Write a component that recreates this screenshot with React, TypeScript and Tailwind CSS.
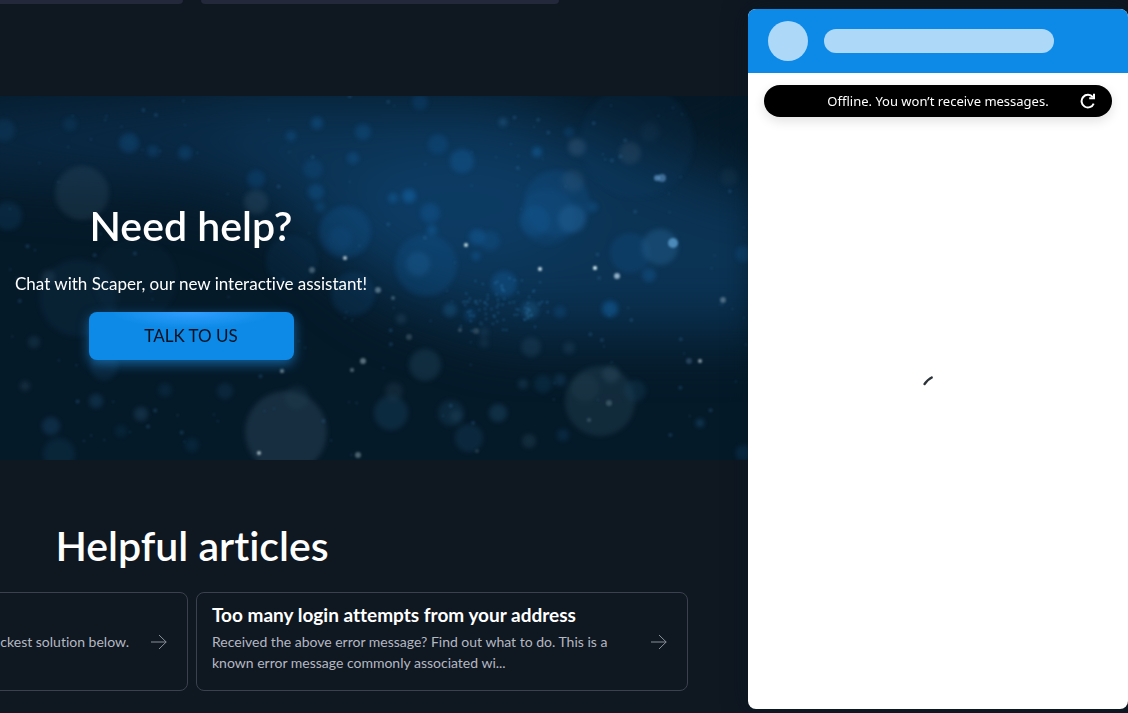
import React from "react";

type Dot = [number, number, number, string, number];

const bokeh: Dot[] = [
  [82, 97, 27, "#4a6a80", 0.3],
  [8, 120, 14, "#1b6298", 0.28],
  [4, 34, 11, "#1b6298", 0.28],
  [129, 47, 10, "#1a6fb5", 0.35],
  [153, 55, 6, "#1a6fb5", 0.3],
  [185, 57, 7, "#1a6fb5", 0.35],
  [70, 28, 7, "#1b6298", 0.25],
  [78, 202, 39, "#1d4b70", 0.22],
  [135, 184, 42, "#1d4b70", 0.13],
  [48, 181, 7, "#6b8fa8", 0.22],
  [256, 106, 12, "#5f8199", 0.28],
  [256, 83, 9, "#1464a8", 0.35],
  [313, 73, 10, "#1464a8", 0.3],
  [316, 96, 8, "#1a6fb5", 0.4],
  [320, 111, 5, "#1a6fb5", 0.35],
  [317, 27, 6, "#1a6fb5", 0.45],
  [291, 40, 5, "#1a6fb5", 0.4],
  [353, 62, 6, "#1a6fb5", 0.4],
  [363, 36, 8, "#1a6fb5", 0.35],
  [292, 165, 26, "#16548c", 0.2],
  [345, 136, 26, "#1764a6", 0.36],
  [340, 143, 12, "#1764a6", 0.25],
  [353, 198, 22, "#1764a6", 0.24],
  [286, 336, 41, "#4a6a80", 0.38],
  [297, 301, 12, "#3c627d", 0.2],
  [96, 305, 7, "#2a6596", 0.38],
  [51, 330, 9, "#2a6596", 0.38],
  [59, 358, 16, "#1f5a86", 0.25],
  [141, 318, 7, "#3c6c90", 0.38],
  [165, 294, 7, "#1b6298", 0.22],
  [225, 295, 8, "#2a6596", 0.25],
  [121, 335, 6, "#1b6298", 0.2],
  [192, 349, 7, "#1b6298", 0.22],
  [104, 270, 14, "#24608f", 0.25],
  [34, 246, 6, "#3c6c90", 0.3],
  [25, 290, 5, "#54788f", 0.3],
  [438, 48, 10, "#1464a8", 0.35],
  [462, 65, 12, "#1a6fb5", 0.42],
  [420, 6, 8, "#1464a8", 0.3],
  [503, 26, 4, "#3c86bd", 0.45],
  [537, 56, 5, "#1a7fd0", 0.5],
  [577, 51, 9, "#5b7fa0", 0.38],
  [569, 36, 5, "#1a6fb5", 0.3],
  [630, 57, 11, "#5f7488", 0.33],
  [650, 36, 10, "#4a6a80", 0.16],
  [637, 45, 57, "#12497c", 0.18],
  [557, 107, 33, "#1764a6", 0.3],
  [548, 121, 28, "#1764a6", 0.22],
  [573, 85, 11, "#52738f", 0.26],
  [535, 125, 15, "#1764a6", 0.4],
  [572, 123, 14, "#3079b4", 0.44],
  [593, 111, 5, "#1a6fb5", 0.4],
  [409, 100, 7, "#1a7fd0", 0.5],
  [393, 102, 5, "#1a7fd0", 0.4],
  [430, 117, 10, "#1464a8", 0.45],
  [432, 134, 5, "#1a7fd0", 0.4],
  [477, 141, 8, "#1a6fb5", 0.48],
  [490, 145, 10, "#1764a6", 0.35],
  [476, 160, 4, "#1a7fd0", 0.4],
  [426, 169, 31, "#1764a6", 0.32],
  [418, 168, 12, "#2b7bb8", 0.32],
  [504, 188, 13, "#1a70b8", 0.4],
  [630, 157, 20, "#1764a6", 0.3],
  [660, 151, 18, "#3479ad", 0.42],
  [649, 179, 7, "#1a70b8", 0.42],
  [610, 213, 8, "#1a7fd0", 0.5],
  [530, 214, 9, "#2b78af", 0.38],
  [450, 214, 7, "#2b78af", 0.38],
  [470, 219, 6, "#1764a6", 0.35],
  [560, 216, 6, "#1764a6", 0.35],
  [744, 158, 8, "#1a7fd0", 0.3],
  [531, 251, 10, "#355d7c", 0.38],
  [569, 252, 6, "#355d7c", 0.38],
  [425, 269, 16, "#356480", 0.36],
  [600, 305, 35, "#3e6274", 0.36],
  [585, 292, 14, "#5a7585", 0.16],
  [611, 278, 9, "#4b7186", 0.33],
  [635, 295, 11, "#26587a", 0.3],
  [543, 288, 9, "#1c5880", 0.3],
  [560, 284, 6, "#2a6596", 0.35],
  [523, 288, 5, "#3c6c90", 0.35],
  [391, 317, 17, "#24597f", 0.38],
  [394, 295, 9, "#426078", 0.28],
  [451, 317, 13, "#24597f", 0.32],
  [456, 320, 6, "#3c6c90", 0.3],
  [498, 317, 9, "#2f6990", 0.4],
  [469, 342, 14, "#24597f", 0.34],
  [529, 345, 7, "#3c6478", 0.36],
  [563, 339, 6, "#1b6298", 0.3],
  [700, 327, 4, "#2f86bd", 0.4],
  [744, 357, 8, "#1b6298", 0.35],
  [729, 81, 9, "#33566c", 0.25],
  [484, 247, 5, "#365f80", 0.3],
  [484, 236, 5, "#365f80", 0.35],
  [401, 223, 5, "#4a6f91", 0.35],
];

const sparks: Dot[] = [
  [466, 149, 2, "#d5eeec", 0.9],
  [540, 173, 2, "#e0f4ff", 0.9],
  [595, 172, 2, "#e0f7ff", 1],
  [617, 180, 3, "#bcd8ee", 0.75],
  [673, 147, 5, "#5a9ccd", 0.8],
  [657, 82, 3, "#6aa0d2", 0.65],
  [662, 82, 4, "#6aa0d2", 0.55],
  [723, 204, 3, "#9cb5c5", 0.45],
  [700, 265, 2, "#b5c5d0", 0.75],
  [689, 265, 3, "#547295", 0.4],
  [345, 162, 2, "#d8e8ee", 0.8],
  [312, 174, 3, "#93afbd", 0.4],
  [378, 194, 3, "#9cb9ce", 0.5],
  [393, 202, 2, "#7ca0b9", 0.45],
  [363, 265, 3, "#9db4c2", 0.55],
  [352, 274, 2, "#9db4c2", 0.5],
  [282, 275, 2, "#b5c5d0", 0.6],
  [259, 357, 2, "#c5d4dc", 0.8],
  [358, 359, 3, "#8fa5b1", 0.5],
  [609, 307, 3, "#7e9aaa", 0.35],
  [589, 324, 2, "#7e9aaa", 0.35],
  [409, 241, 3, "#6d8898", 0.35],
  [460, 234, 2, "#6d8898", 0.45],
  [476, 235, 3, "#6d8898", 0.35],
  [477, 355, 2, "#5f7c8c", 0.3],
];

function noise(n: number) {
  const v = Math.sin(n * 127.1 + 11.7) * 43758.5453;
  return v - Math.floor(v);
}

const specks: Dot[] = Array.from({ length: 240 }, (_, i) => {
  const a = noise(i);
  const b = noise(i + 500);
  const c = noise(i + 1000);
  if (i < 80) {
    return [500 + (a + c - 1) * 55, 209 + (b + noise(i + 1500) - 1) * 32, 1, "#3a8cc8", 0.45];
  }
  return [a * 748, b * 364, c > 0.75 ? 2 : 1, "#3f83b4", 0.3 - c * 0.08];
});

function Circles({ items }: { items: Dot[] }) {
  return (
    <>
      {items.map(([x, y, r, fill, o], i) => (
        <circle key={i} cx={x} cy={y} r={r} fill={fill} opacity={o} />
      ))}
    </>
  );
}

function Backdrop() {
  return (
    <svg
      className="absolute inset-0 h-full w-full"
      viewBox="0 0 1128 364"
      preserveAspectRatio="xMinYMid slice"
      aria-hidden="true"
    >
      <defs>
        <filter id="haze" x="-50%" y="-50%" width="200%" height="200%" colorInterpolationFilters="sRGB">
          <feGaussianBlur stdDeviation="30" />
        </filter>
        <filter id="soft" colorInterpolationFilters="sRGB">
          <feGaussianBlur stdDeviation="2.4" />
        </filter>
        <filter id="fine" colorInterpolationFilters="sRGB">
          <feGaussianBlur stdDeviation="0.8" />
        </filter>
      </defs>
      <rect width="1128" height="364" fill="#051a29" />
      <g filter="url(#haze)">
        <path d="M-60 20 L200 0 L330 10 L330 130 L200 85 L-60 70Z" fill="#0a2b48" />
        <path d="M200 0 L500 0 L740 90 L1128 110 L1128 225 L740 235 L500 235 L390 200 L300 130Z" fill="#0b3354" />
        <ellipse cx="460" cy="110" rx="120" ry="60" fill="#0c3b63" />
        <ellipse cx="670" cy="-5" rx="120" ry="40" fill="#051826" />
      </g>
      <g filter="url(#soft)" opacity="0.7">
        <Circles items={bokeh} />
      </g>
      <g filter="url(#fine)">
        <Circles items={specks} />
        <Circles items={sparks} />
      </g>
    </svg>
  );
}

function Arrow() {
  return (
    <svg className="h-4 w-4 shrink-0" viewBox="0 0 16 16" fill="none" stroke="#8b909b" strokeWidth="1" aria-hidden="true">
      <path d="M0 8H15.2M8 1L15.2 8L8 15" />
    </svg>
  );
}

function ChatPanel() {
  return (
    <aside
      aria-label="Chat"
      className="fixed top-[9px] right-0 bottom-1 flex w-[380px] flex-col overflow-hidden rounded-lg bg-white font-['Noto_Sans','Open_Sans',sans-serif] shadow-[0_0_24px_rgba(5,25,35,0.6)]"
    >
      <header className="flex h-16 shrink-0 items-center gap-4 bg-[#0d8ae7] px-5">
        <div className="h-10 w-10 rounded-full bg-[#aed8f8]" />
        <div className="h-6 w-[230px] rounded-full bg-[#aed8f8]" />
      </header>
      <div className="mx-4 mt-3 flex h-8 shrink-0 items-center rounded-full bg-black px-4 text-white shadow-[0_4px_12px_rgba(0,0,0,0.12)]">
        <p className="flex-1 pl-4 text-center text-[13px] leading-5">Offline. You won’t receive messages.</p>
        <button type="button" aria-label="Reconnect" className="h-4 w-4">
          <svg className="h-4 w-4" viewBox="0 0 16 16" fill="none" stroke="currentColor" strokeWidth="2" aria-hidden="true">
            <path d="M13.7 10.6A6.3 6.3 0 1 1 12.8 4.2" />
            <path d="M9.2 5.2H14V0.8" />
          </svg>
        </button>
      </div>
      <div className="flex flex-1 items-start justify-center pt-[259px]">
        <svg className="h-8 w-8" viewBox="0 0 32 32" fill="none" stroke="#2c3338" strokeWidth="2.2" role="img" aria-label="Loading">
          <path d="M2 8.8Q5.2 3.6 10.6 1" />
        </svg>
      </div>
    </aside>
  );
}

export default function App() {
  return (
    <div className="min-h-screen overflow-hidden bg-[#0f1721] font-[Lato,'Open_Sans',sans-serif] text-white [font-variant-ligatures:none]">
      <main>
        <div className="-ml-[304px] flex w-[992px] justify-center gap-[18px]">
          <div className="h-1 w-[358px] rounded-b-lg bg-[#23283a]" />
          <div className="h-1 w-[358px] rounded-b-lg bg-[#23283a]" />
        </div>

        <section className="relative mt-[92px] overflow-hidden">
          <Backdrop />
          <div className="relative -ml-[305px] flex h-[364px] w-[992px] flex-col items-center pt-[106px]">
            <h2 className="text-[41px] leading-[48px] font-semibold">Need help?</h2>
            <p className="mt-[22px] text-[17px] leading-6">Chat with Scaper, our new interactive assistant!</p>
            <button
              type="button"
              className="mt-4 h-12 w-[205px] rounded-lg bg-[#0d8ae7] bg-[radial-gradient(ellipse_80px_16px_at_50%_0%,#329fff_0%,#0d8ae7_100%)] text-[17px] text-[#07111d] uppercase shadow-[0_4px_12px_rgba(30,145,235,0.6)]"
            >
              Talk to us
            </button>
          </div>
        </section>

        <section className="-ml-[304px] w-[992px] pt-[62px]">
          <h2 className="text-center text-[41px] leading-[48px] font-semibold">Helpful articles</h2>
          <div className="mt-[22px] grid h-[99px] grid-cols-2 gap-2">
            <a href="#solutions" className="flex items-center gap-[22px] rounded-lg border border-[#3b414e] pr-5 pl-[15px]">
              <p className="flex-1 text-right text-sm leading-[21px] text-[#b4b8c1]">ckest solution below.</p>
              <Arrow />
            </a>
            <a href="#login-attempts" className="flex items-center gap-[22px] rounded-lg border border-[#3b414e] pr-5 pl-[15px]">
              <div className="flex-1 pb-2">
                <h3 className="text-[19px] leading-6 font-bold">Too many login attempts from your address</h3>
                <p className="mt-1 text-sm leading-[21px] text-[#b4b8c1]">
                  Received the above error message? Find out what to do. This is a
                  <br />
                  known error message commonly associated wi...
                </p>
              </div>
              <Arrow />
            </a>
          </div>
        </section>
      </main>
      <ChatPanel />
    </div>
  );
}
